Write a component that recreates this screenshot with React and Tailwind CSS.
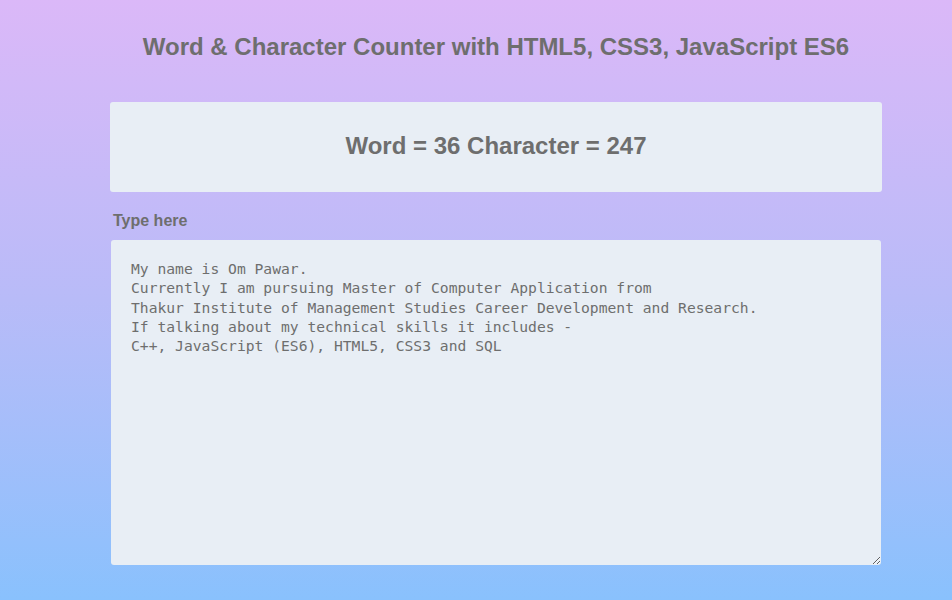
import React, { useState } from 'react';

const initialText = `My name is Om Pawar.
Currently I am pursuing Master of Computer Application from
Thakur Institute of Management Studies Career Development and Research.
If talking about my technical skills it includes -
C++, JavaScript (ES6), HTML5, CSS3 and SQL`;

const App = () => {
    const [text, setText] = useState(initialText);
    const [counts, setCounts] = useState({ words: 36, chars: 247 });

    const handleChange = (e) => {
        const value = e.target.value;
        setText(value);
        setCounts({
            words: value.split(/\s+/).filter(w => w.length > 0).length,
            chars: value.length
        });
    };

    return (
        <div className="min-h-[600px] w-full bg-gradient-to-b from-[#dbb8f8] via-[#b8bbf8] to-[#89c1fd] font-['Liberation_Sans',Arial,sans-serif] text-[#6e6e6e]">
            <div className="ml-[110px] w-[772px] pt-[33px]">
                <h1 className="text-center text-[24px] font-bold leading-[28px]">
                    Word &amp; Character Counter with HTML5, CSS3, JavaScript ES6
                </h1>

                <div className="mt-[41px] h-[90px] pb-[3px] rounded-[3px] bg-[#e8eef5] flex items-center justify-center">
                    <h2 className="text-[24px] font-bold leading-[28px]">
                        Word = {counts.words} Character = {counts.chars}
                    </h2>
                </div>

                <label className="block mt-[19px] ml-[3px] text-[16px] font-bold leading-[20px]">
                    Type here
                </label>

                <textarea
                    value={text}
                    onChange={handleChange}
                    className="block mt-[9px] ml-[1px] w-[770px] h-[325px] rounded-[3px] bg-[#e8eef5] px-[20px] pt-[19px] outline-none font-['DejaVu_Sans_Mono',monospace] text-[14.67px] leading-[19.3px] text-[#6e6e6e]"
                />
            </div>
        </div>
    );
};

export default App;
